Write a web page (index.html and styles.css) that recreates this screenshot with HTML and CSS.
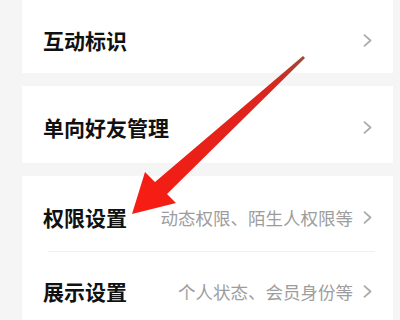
FILE: index.html
```html
<!DOCTYPE html>
<html lang="zh-CN">
<head>
<meta charset="utf-8">
<link rel="stylesheet" href="styles.css">
</head>
<body>
<div class="page">
  <div class="card card-first">
    <div class="row row-a">
      <span class="title">互动标识</span>
      <span class="right">
        <svg class="chev" viewBox="0 0 9 13" width="9" height="13"><path d="M1.5 1.2 L7.5 6.5 L1.5 11.8" fill="none" stroke="#ababab" stroke-width="1.8" stroke-linecap="round" stroke-linejoin="round"/></svg>
      </span>
    </div>
  </div>
  <div class="card">
    <div class="row row-b">
      <span class="title">单向好友管理</span>
      <span class="right">
        <svg class="chev" viewBox="0 0 9 13" width="9" height="13"><path d="M1.5 1.2 L7.5 6.5 L1.5 11.8" fill="none" stroke="#ababab" stroke-width="1.8" stroke-linecap="round" stroke-linejoin="round"/></svg>
      </span>
    </div>
  </div>
  <div class="card">
    <div class="row row-c">
      <span class="title">权限设置</span>
      <span class="right">
        <span class="sub">动态权限、陌生人权限等</span>
        <svg class="chev" viewBox="0 0 9 13" width="9" height="13"><path d="M1.5 1.2 L7.5 6.5 L1.5 11.8" fill="none" stroke="#ababab" stroke-width="1.8" stroke-linecap="round" stroke-linejoin="round"/></svg>
      </span>
    </div>
    <div class="divider"></div>
    <div class="row row-d">
      <span class="title">展示设置</span>
      <span class="right">
        <span class="sub">个人状态、会员身份等</span>
        <svg class="chev" viewBox="0 0 9 13" width="9" height="13"><path d="M1.5 1.2 L7.5 6.5 L1.5 11.8" fill="none" stroke="#ababab" stroke-width="1.8" stroke-linecap="round" stroke-linejoin="round"/></svg>
      </span>
    </div>
  </div>
</div>
<svg class="arrow" viewBox="0 0 400 320" width="400" height="320">
  <defs>
    <linearGradient id="ag" x1="304" y1="56" x2="150" y2="195" gradientUnits="userSpaceOnUse">
      <stop offset="0" stop-color="#9a4a38"/>
      <stop offset="0.2" stop-color="#d8261f"/>
      <stop offset="1" stop-color="#f51d14"/>
    </linearGradient>
  </defs>
  <polygon points="303,56 305,58 167,194 176,203 132,214 145,172 155,182" fill="url(#ag)"/>
</svg>
</body>
</html>
```

FILE: styles.css
```css
html, body {
  margin: 0;
  padding: 0;
}
body {
  background: #f5f5f5;
  width: 400px;
  height: 320px;
  overflow: hidden;
  position: relative;
  font-family: "Noto Sans CJK SC", "Noto Sans", sans-serif;
}
.page {
  display: flex;
  flex-direction: column;
  gap: 13px;
  padding: 0 7px 0 22px;
}
.card {
  background: #ffffff;
  display: flex;
  flex-direction: column;
}
.row {
  display: flex;
  align-items: center;
  justify-content: space-between;
  padding: 0 21px 0 21px;
  box-sizing: border-box;
}
.row-a {
  height: 73px;
  padding-top: 7px;
}
.row-b {
  height: 77px;
  padding-top: 5px;
}
.row-c {
  height: 75px;
  padding-top: 7px;
}
.row-d {
  height: 77px;
  padding-top: 1px;
}
.title {
  font-size: 21px;
  font-weight: 600;
  color: #111111;
}
.right {
  display: flex;
  align-items: center;
  gap: 10px;
}
.sub {
  font-size: 17.5px;
  color: #9d9d9d;
}
.chev {
  display: block;
}
.divider {
  height: 1px;
  background: #f0f0f0;
  margin: 0 18px 0 26px;
}
.arrow {
  position: absolute;
  left: 0;
  top: 0;
  pointer-events: none;
}
```
